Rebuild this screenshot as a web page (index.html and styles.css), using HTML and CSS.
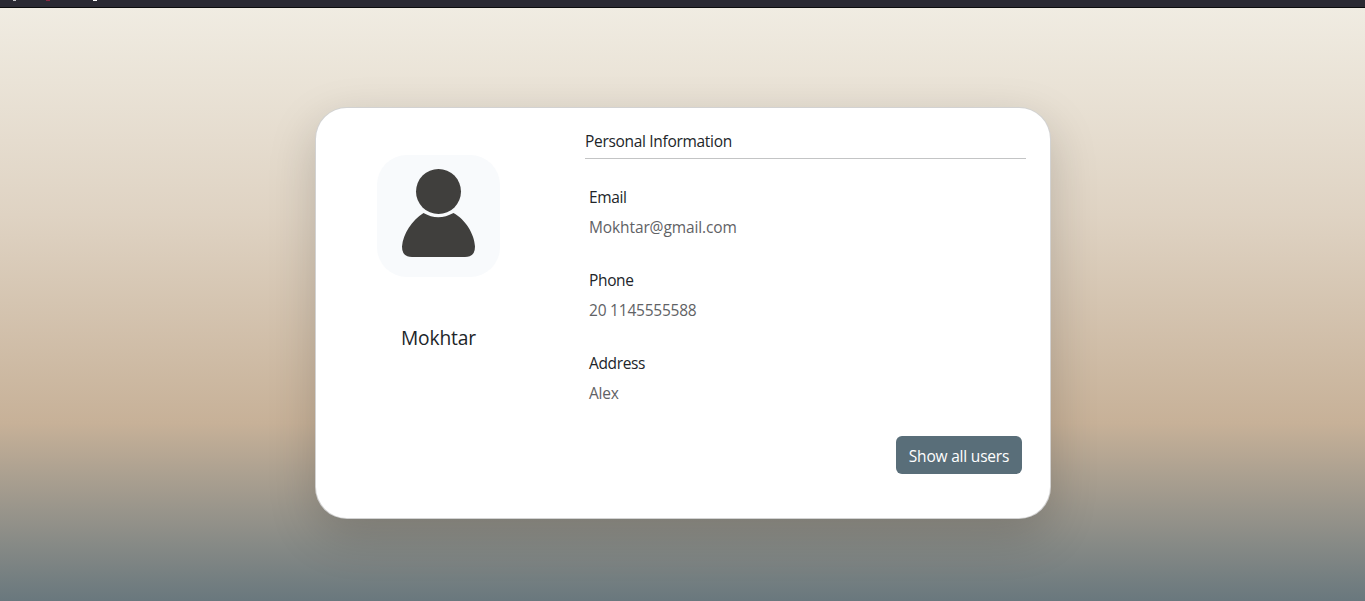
FILE: index.html
```html
<!DOCTYPE html>
<html lang="en">
<head>
<meta charset="utf-8">
<title>Profile</title>
<link rel="stylesheet" href="styles.css">
</head>
<body>
<div class="topbar"><i class="tick tick-gray"></i><i class="tick tick-red"></i><i class="tick tick-white"></i></div>
<main class="page">
  <section class="card">
    <div class="profile">
      <div class="avatar">
        <svg viewBox="0 0 122 122" width="122" height="122" fill="#403f3d">
          <circle cx="61.5" cy="36.5" r="22.5"/>
          <path d="M46.500 58 Q61 66.500 76.500 58 C88 64 97.500 79 98 91.500 Q98 102 88 102 H35 Q25 102 25 91.500 C26 79 35 65 46.500 58Z"/>
        </svg>
      </div>
      <h1 class="name">Mokhtar</h1>
    </div>
    <div class="details">
      <h2 class="heading">Personal Information</h2>
      <dl class="fields">
        <div class="field"><dt>Email</dt><dd class="mail">Mokhtar@gmail.com</dd></div>
        <div class="field"><dt>Phone</dt><dd>20 1145555588</dd></div>
        <div class="field"><dt>Address</dt><dd>Alex</dd></div>
      </dl>
      <button class="button" type="button">Show all users</button>
    </div>
  </section>
</main>
</body>
</html>
```
FILE: styles.css
```css
* { box-sizing: border-box; }
body { margin: 0; height: 601px; overflow: hidden; display: flex; flex-direction: column; font-family: "Open Sans", "Noto Sans", sans-serif; font-size: 15.5px; color: #212529; }
.topbar { flex: none; height: 8px; background: #2b2a33; border-bottom: 1px solid #0c0c0d; display: flex; align-items: flex-start; padding-left: 13px; }
.tick { height: 1px; width: 3px; background: #c5c5c9; }
.tick-red { width: 4px; margin-left: 30px; background: #8b2942; }
.tick-white { width: 4px; margin-left: 43px; background: #fff; }
.page { flex: 1; display: flex; align-items: flex-start; justify-content: center; padding: 99px 0 0 1px; background: linear-gradient(#f0ece2 0, #dfd3c3 207px, #c7b198 415px, #596e79 623px); }
.card { width: 736px; height: 412px; display: flex; background: #fff; border: 1px solid rgba(0,0,0,.175); border-radius: 32px; box-shadow: 0 16px 48px rgba(0,0,0,.175); }
.profile { width: 245px; display: flex; flex-direction: column; align-items: center; padding-top: 47px; }
.avatar { width: 123px; height: 122px; border-radius: 30px; background: #f8fafc; }
.avatar svg { display: block; }
.name { margin: 47px 0 0; font-size: 19.2px; line-height: 28px; font-weight: 400; letter-spacing: -.15px; }
.details { flex: 1; display: flex; flex-direction: column; padding: 21px 24px 0; }
.heading { margin: 0; height: 30px; border-bottom: 1px solid #c3c4c5; font-size: 15.5px; line-height: 24px; font-weight: 400; letter-spacing: -.31px; }
.fields { margin: 26px 0 0; padding-left: 4px; }
.field { height: 83px; }
.field dt, .field dd { margin: 0; line-height: 24px; }
.field dt { letter-spacing: -.35px; }
.field dd { margin-top: 6px; color: #5f6265; letter-spacing: -.22px; }
.field .mail { letter-spacing: -.11px; }
.button { align-self: flex-end; margin: 2px 4px 0; width: 126px; height: 38px; padding: 2px 0 0; border: 0; border-radius: 6px; background: #596e79; color: #fff; font: inherit; letter-spacing: -.2px; white-space: nowrap; }
```
